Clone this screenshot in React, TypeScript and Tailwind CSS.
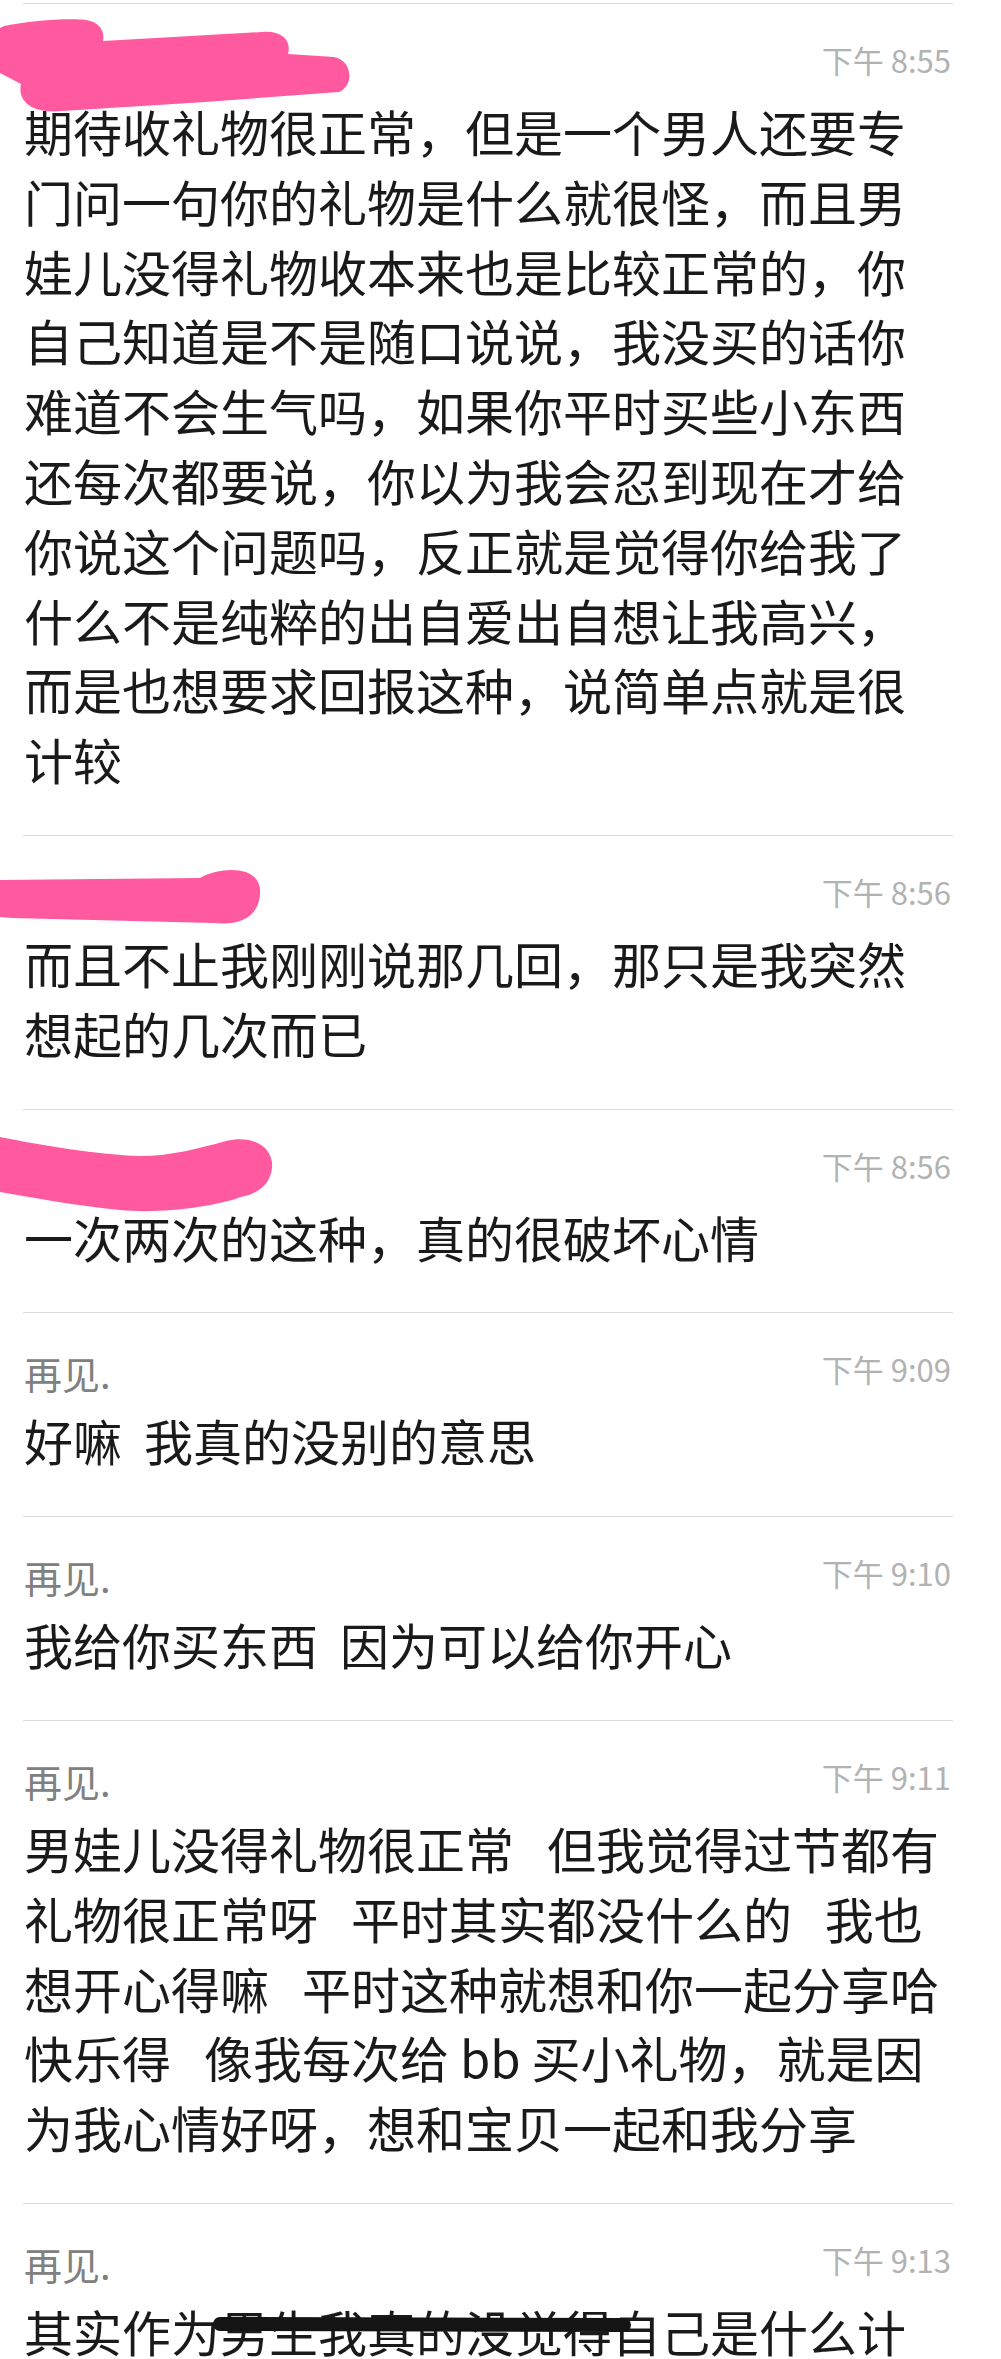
const messages = [
  {
    name: "",
    time: "下午 8:55",
    text: "期待收礼物很正常，但是一个男人还要专门问一句你的礼物是什么就很怪，而且男娃儿没得礼物收本来也是比较正常的，你自己知道是不是随口说说，我没买的话你难道不会生气吗，如果你平时买些小东西还每次都要说，你以为我会忍到现在才给你说这个问题吗，反正就是觉得你给我了什么不是纯粹的出自爱出自想让我高兴，而是也想要求回报这种，说简单点就是很计较",
  },
  {
    name: "",
    time: "下午 8:56",
    text: "而且不止我刚刚说那几回，那只是我突然想起的几次而已",
  },
  {
    name: "",
    time: "下午 8:56",
    text: "一次两次的这种，真的很破坏心情",
  },
  {
    name: "再见.",
    time: "下午 9:09",
    text: "好嘛  我真的没别的意思",
  },
  {
    name: "再见.",
    time: "下午 9:10",
    text: "我给你买东西  因为可以给你开心",
  },
  {
    name: "再见.",
    time: "下午 9:11",
    text: "男娃儿没得礼物很正常   但我觉得过节都有礼物很正常呀   平时其实都没什么的   我也想开心得嘛   平时这种就想和你一起分享哈快乐得   像我每次给 bb 买小礼物，就是因为我心情好呀，想和宝贝一起和我分享",
  },
  {
    name: "再见.",
    time: "下午 9:13",
    text: "其实作为男生我真的没觉得自己是什么计较的人",
  },
];

// scribbles over the names, drawn in page coordinates
function Redactions() {
  return (
    <svg
      className="pointer-events-none absolute left-0 top-0"
      width="1001"
      height="2359"
      viewBox="0 0 1001 2359"
    >
      <g fill="#ff5aa0">
        <path d="M4 26 C30 21 66 18 86 20 C100 22 105 32 103 41 L262 32 C281 30 292 40 288 54 L334 57 C352 60 355 85 339 92 L205 102 L62 111 C33 114 17 102 21 84 L0 73 L0 28 Z" />
        <path d="M0 880 L200 878 C222 866 259 866 260 890 C261 915 242 926 214 923 L12 918 L0 917 Z" />
        <path d="M0 1137 C40 1145 100 1155 140 1156 C172 1156 200 1148 226 1141 C257 1134 274 1150 272 1168 C270 1186 256 1194 241 1197 C214 1207 160 1214 120 1210 C70 1205 30 1197 0 1192 Z" />
      </g>
      <path
        d="M220 2324 L624 2325"
        stroke="#141414"
        strokeWidth="14"
        strokeLinecap="round"
        fill="none"
      />
    </svg>
  );
}

export default function App() {
  return (
    <div className="relative h-[2359px] w-[1001px] overflow-hidden bg-white font-['Noto_Sans_CJK_SC',sans-serif]">
      <div className="pl-[23px] pr-[48px] pt-[3px]">
        {messages.map((msg, i) => (
          <div key={i} className="border-t border-[#dcdcdc] pb-[41px] pt-[38px]">
            <div className="flex h-[44px] items-start justify-between pl-[1px]">
              <span className="text-[38px] leading-[44px] text-[#808080]">{msg.name}</span>
              <span className="mr-[2px] text-[31px] leading-[36px] text-[#b2b2b2]">{msg.time}</span>
            </div>
            <p className="mt-[10px] whitespace-pre-wrap pl-[1px] text-[49px] leading-[69.8px] text-[#1a1a1a]">
              {msg.text}
            </p>
          </div>
        ))}
      </div>
      <Redactions />
    </div>
  );
}
